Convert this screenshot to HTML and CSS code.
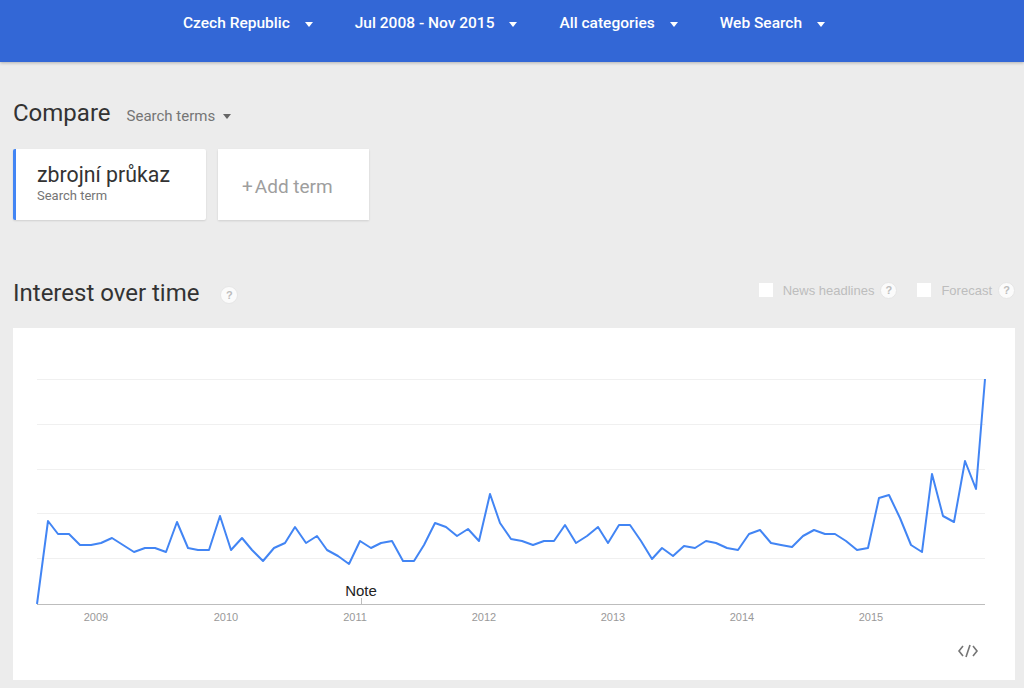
FILE: index.html
```html
<!DOCTYPE html>
<html>
<head>
	<title>Google Trends - zbrojní průkaz</title>
	<meta charset="utf-8">
	<link rel="stylesheet" href="styles.css">
</head>
<body>
	<!-- top filter bar -->
	<header class="topbar">
		<nav class="filters">
			<a href="#" class="filter">Czech Republic<i class="caret"></i></a>
			<a href="#" class="filter">Jul 2008 - Nov 2015<i class="caret"></i></a>
			<a href="#" class="filter">All categories<i class="caret"></i></a>
			<a href="#" class="filter">Web Search<i class="caret"></i></a>
		</nav>
	</header>

	<main class="page">
		<!-- compare terms -->
		<section class="compare">
			<div class="compare-head">
				<h1 class="title">Compare</h1>
				<a href="#" class="picker">Search terms<i class="caret caret-dark"></i></a>
			</div>
			<div class="terms">
				<div class="term-card term-active">
					<div class="term-name">zbrojní průkaz</div>
					<div class="term-type">Search term</div>
				</div>
				<div class="term-card term-add"><span class="plus">+</span>Add term</div>
			</div>
		</section>

		<!-- interest over time -->
		<section class="interest">
			<div class="interest-head">
				<h2 class="title">Interest over time <span class="help help-title">?</span></h2>
				<div class="options">
					<label class="option"><span class="checkbox"></span>News headlines <span class="help">?</span></label>
					<label class="option"><span class="checkbox"></span>Forecast <span class="help">?</span></label>
				</div>
			</div>
			<div class="chart-card">
				<svg class="chart" width="1002" height="352" viewBox="13 328 1002 352">
					<g class="grid">
						<line x1="37" x2="985" y1="379.5" y2="379.5"></line>
						<line x1="37" x2="985" y1="424.5" y2="424.5"></line>
						<line x1="37" x2="985" y1="469.5" y2="469.5"></line>
						<line x1="37" x2="985" y1="513.5" y2="513.5"></line>
						<line x1="37" x2="985" y1="558.5" y2="558.5"></line>
					</g>
					<line class="axis" x1="37" x2="985" y1="604.5" y2="604.5"></line>
					<line class="axis" x1="361.5" x2="361.5" y1="598" y2="604"></line>
					<text class="note" x="361" y="596">Note</text>
					<g class="years">
						<text x="96" y="621">2009</text>
						<text x="226" y="621">2010</text>
						<text x="355" y="621">2011</text>
						<text x="484" y="621">2012</text>
						<text x="613" y="621">2013</text>
						<text x="742" y="621">2014</text>
						<text x="871" y="621">2015</text>
					</g>
					<polyline class="series" points="37,604 48,521 58,534 69,534 80,545 91,545 101,543 112,538 123,545 134,552 145,548 155,548 166,552 177,522 188,548 198,550 209,550 220,516 231,550 242,538 252,550 263,561 274,548 285,543 295,527 306,543 317,536 327,550 338,556 349,564 360,541 371,548 381,543 392,541 403,561 414,561 424,545 435,523 446,527 457,536 468,529 479,541 490,494 500,523 511,539 522,541 533,545 544,541 554,541 565,525 576,543 587,536 598,527 608,543 619,525 630,525 641,541 652,559 662,548 673,556 684,546 695,548 706,541 716,543 727,548 738,550 749,534 760,530 771,543 781,545 792,547 803,536 814,530 825,534 835,534 846,541 857,550 868,548 879,498 889,495 900,518 911,545 922,552 932,474 943,516 954,522 965,461 976,489 985,379"></polyline>
					<!-- embed code icon -->
					<g class="embed">
						<polyline points="963,646 959,651 963,656"></polyline>
						<line x1="970" y1="645" x2="966" y2="657"></line>
						<polyline points="973,646 977,651 973,656"></polyline>
					</g>
				</svg>
			</div>
		</section>
	</main>
</body>
</html>
```

FILE: styles.css
```css
body {
	margin: 0;
	background-color: #ececec;
	font-family: Roboto, "Noto Sans", Arial, sans-serif;
	color: #333;
	height: 688px;
	overflow: hidden;
}
a {
	text-decoration: none;
	color: inherit;
}
i {
	font-style: normal;
}

/* top bar */
.topbar {
	height: 62px;
	background-color: #3367d6;
	box-shadow: 0 1px 3px rgba(0,0,0,.25);
}
.filters {
	display: flex;
	gap: 42px;
	padding: 13px 0 0 183px;
}
.filter {
	display: flex;
	align-items: center;
	color: #fff;
	font-size: 15.5px;
	font-weight: 500;
	line-height: 20px;
}
.caret {
	display: inline-block;
	width: 0;
	height: 0;
	margin-left: 15px;
	margin-top: 2px;
	border-left: 4px solid transparent;
	border-right: 4px solid transparent;
	border-top: 5px solid #fff;
}
.caret-dark {
	margin-left: 8px;
	border-top-color: #666;
}

/* page body */
.page {
	padding: 0 9px 0 13px;
}
.title {
	margin: 0;
	font-size: 24px;
	font-weight: 400;
	line-height: 28px;
	color: #333;
}

/* compare */
.compare {
	padding-top: 37px;
}
.compare-head {
	display: flex;
	align-items: center;
	height: 28px;
}
.picker {
	display: flex;
	align-items: center;
	margin-left: 16px;
	margin-top: 5px;
	font-size: 15px;
	color: #757575;
}
.terms {
	display: flex;
	gap: 12px;
	margin-top: 22px;
}
.term-card {
	box-sizing: border-box;
	height: 71px;
	background-color: #fff;
	box-shadow: 0 1px 2px rgba(0,0,0,.12);
}
.term-active {
	width: 193px;
	padding: 12px 0 0 21px;
	border-left: 3px solid #4285f4;
	border-radius: 2px;
}
.term-name {
	font-size: 21.3px;
	line-height: 27px;
	color: #333;
}
.term-type {
	font-size: 13px;
	line-height: 16px;
	color: #757575;
}
.term-add {
	width: 151px;
	padding: 26px 0 0 24px;
	font-size: 19px;
	line-height: 24px;
	color: #9e9e9e;
}
.plus {
	margin-right: 2px;
}

/* interest over time */
.interest {
	margin-top: 59px;
}
.interest-head {
	display: flex;
	align-items: center;
	justify-content: space-between;
	height: 28px;
}
.interest-head .title {
	display: flex;
	align-items: center;
}
.help {
	display: inline-flex;
	align-items: center;
	justify-content: center;
	box-sizing: border-box;
	width: 17px;
	height: 17px;
	border-radius: 50%;
	border: 1px solid #e6e6e6;
	background-color: #fbfbfb;
	color: #bdbdbd;
	font-family: Arial, "Liberation Sans", sans-serif;
	font-size: 11px;
	font-weight: 700;
	line-height: 15px;
}
.help-title {
	width: 18px;
	height: 18px;
	margin-left: 21px;
	margin-top: 4px;
}
.options {
	display: flex;
	gap: 20px;
	margin-top: -6px;
}
.option {
	display: flex;
	align-items: center;
	font-family: "Liberation Sans", Arial, sans-serif;
	font-size: 13px;
	color: #bdbdbd;
}
.option .help {
	margin-left: 6px;
}
.checkbox {
	width: 14px;
	height: 14px;
	margin-right: 10px;
	background-color: #fff;
}

/* chart */
.chart-card {
	height: 352px;
	margin-top: 21px;
	background-color: #fff;
}
.chart {
	display: block;
}
.grid line {
	stroke: #f0f0f0;
	stroke-width: 1;
}
.axis {
	stroke: #bdbdbd;
	stroke-width: 1;
}
.series {
	fill: none;
	stroke: #4285f4;
	stroke-width: 2;
	stroke-linejoin: round;
}
.years text {
	font-family: "Liberation Sans", Arial, sans-serif;
	font-size: 11px;
	fill: #999;
	text-anchor: middle;
}
.note {
	font-family: "Liberation Sans", Arial, sans-serif;
	font-size: 15px;
	fill: #222;
	text-anchor: middle;
}
.embed polyline,
.embed line {
	fill: none;
	stroke: #757575;
	stroke-width: 1.6;
}
```
